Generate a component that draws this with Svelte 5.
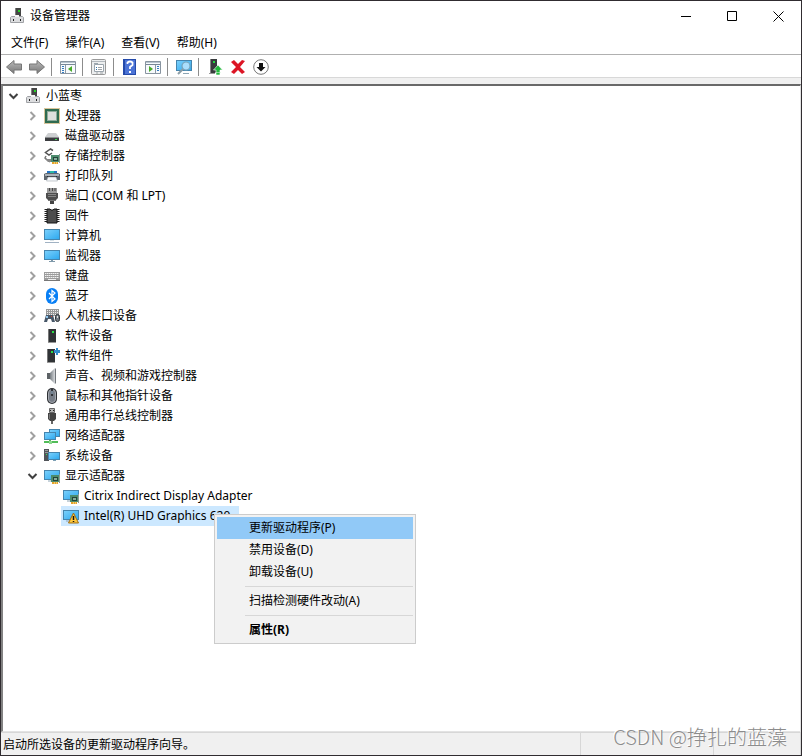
<script>
	const menus = ["文件(F)", "操作(A)", "查看(V)", "帮助(H)"];

	const tools = [
		[
			{ icon: "back", label: "后退" },
			{ icon: "forward", label: "前进" },
		],
		[{ icon: "console-tree", label: "显示/隐藏控制台树" }],
		[{ icon: "properties", label: "属性" }],
		[
			{ icon: "help", label: "帮助" },
			{ icon: "action-pane", label: "显示/隐藏操作窗格" },
		],
		[{ icon: "scan", label: "扫描检测硬件改动" }],
		[
			{ icon: "update", label: "更新驱动程序" },
			{ icon: "uninstall", label: "卸载设备" },
			{ icon: "disable", label: "禁用设备" },
		],
	];

	const categories = [
		{ icon: "cpu", name: "处理器" },
		{ icon: "disk", name: "磁盘驱动器" },
		{ icon: "storage", name: "存储控制器" },
		{ icon: "printer", name: "打印队列" },
		{ icon: "port", name: "端口 (COM 和 LPT)" },
		{ icon: "firmware", name: "固件" },
		{ icon: "pc", name: "计算机" },
		{ icon: "monitor", name: "监视器" },
		{ icon: "keyboard", name: "键盘" },
		{ icon: "bluetooth", name: "蓝牙" },
		{ icon: "hid", name: "人机接口设备" },
		{ icon: "software", name: "软件设备" },
		{ icon: "component", name: "软件组件" },
		{ icon: "sound", name: "声音、视频和游戏控制器" },
		{ icon: "mouse", name: "鼠标和其他指针设备" },
		{ icon: "usb", name: "通用串行总线控制器" },
		{ icon: "network", name: "网络适配器" },
		{ icon: "system", name: "系统设备" },
		{
			icon: "display",
			name: "显示适配器",
			devices: [
				{ icon: "display", name: "Citrix Indirect Display Adapter" },
				{ icon: "warning", name: "Intel(R) UHD Graphics 620" },
			],
		},
	];

	const actions = [
		["更新驱动程序(P)", "禁用设备(D)", "卸载设备(U)"],
		["扫描检测硬件改动(A)"],
		["属性(R)"],
	];

	let expanded = $state({ 显示适配器: true });
	let selected = $state("Intel(R) UHD Graphics 620");
	let menuOpen = $state(true);
</script>

{#snippet screen(x, y, w, h)}
	<rect {x} {y} width={w} height={h} fill="#4585ae" />
	<rect x={x + 1} y={y + 1} width={w - 2} height={h - 2} fill="url(#sky)" />
{/snippet}

{#snippet board()}
	<path d="M7 7h9v7H7z" fill="#4c8c6d" />
	<path d="M15.500 6v9" stroke="#8d9a94" />
	<path d="M9 9h5v4H9z" fill="#24443a" />
	<path d="M10 10h3v2h-3z" fill="#84ad9b" />
	<path d="M8 14h6v2H8z" fill="#e5a32a" />
	<path d="M10.500 14v2M12.500 14v2" stroke="#fff0b0" stroke-width=".5" />
{/snippet}

{#snippet tower(x)}
	<path d="M{x} 1h8v13H{x}z" fill="#303336" />
	<path d="M{x} 1h1v13H{x}z" fill="#777" />
	<path d="M{x + 4} 3h2v2h-2z" fill="#29df47" />
	<path d="M{x} 14h8v1H{x}z" fill="#999" />
{/snippet}

{#snippet icon(name)}
	<svg class="icon" viewBox="0 0 16 16" aria-hidden="true">
		{#if name === "computer"}
			<path d="M6 0h6v9H6z" fill="#454545" />
			<path d="M6 0h1v9H6z" fill="#808080" />
			<path d="M9 2h2v2H9z" fill="#25d425" />
			<path d="M1.500 9.500l1-1h11l1 1v5h-13z" fill="#dcdddf" stroke="#a0a2a6" />
			<path d="M6 7h4v2H6z" fill="#f4f4f4" />
			<path d="M4 11h1v2H4zM11 11h1v2h-1z" fill="#222" />
		{:else if name === "cpu"}
			<rect x=".5" y=".5" width="15" height="15" fill="none" stroke="#b08b37" stroke-dasharray="1 1" />
			<rect x="1" y="1" width="14" height="14" fill="#2f6b50" />
			<rect x="3.500" y="3.500" width="9" height="9" fill="#dedfdd" stroke="#8fab9a" />
		{:else if name === "disk"}
			<path d="M4 5h8l3 4H1z" fill="#cdcfd1" />
			<path d="M1 9h14v4H1z" fill="#3b3d40" />
			<path d="M1 9h14v1H1z" fill="#8b8d90" />
			<path d="M11 11h2v1h-2z" fill="#3be052" />
		{:else if name === "storage"}
			<path d="M9 2.500L6.500 1 1.500 4.500 5 7l3-2" fill="none" stroke="#555" stroke-width="1.500" />
			<path d="M2 8l-1 2 5 4" fill="none" stroke="#777" stroke-width="1.500" />
			<path d="M1 11h6v3H4z" fill="#888" />
			{@render board()}
		{:else if name === "printer"}
			<path d="M3 3h10v3H3z" fill="#2475c5" />
			<path d="M6 3h4v3H6z" fill="#28b9a6" />
			<path d="M0 6l2-1h12l2 1v6H0z" fill="#5e666e" />
			<path d="M1 6h14v2H1z" fill="#aab1b7" />
			<path d="M3 8h10v1H3z" fill="#252a30" />
			<path d="M4 9h8l1.500 4h-11z" fill="#f7fafc" stroke="#a2aaaf" stroke-width=".6" />
		{:else if name === "port"}
			<path d="M3 0h10v5H3z" fill="#999" />
			<path d="M5.500 0v3M8.500 0v3M11 0v3" stroke="#444" />
			<path d="M2 5h12v5l-2 2H4l-2-2z" fill="#4d4d4d" />
			<path d="M4 6h8v1H4zM4 8h8v1H4z" fill="#858585" />
			<path d="M4 12h8v1H4z" fill="#777" />
			<path d="M6 13h4v3H6z" fill="#444" />
		{:else if name === "firmware"}
			<path d="M2 1v14M14 1v14" stroke="#222" stroke-width="3" stroke-dasharray="1 1" />
			<path d="M3 1h3l1 1h2l1-1h3v14H3z" fill="#4c4c4c" stroke="#151515" />
		{:else if name === "pc"}
			{@render screen(0, 1, 16, 11)}
			<path d="M6 12h4v1H6z" fill="#d7e2e8" />
			<path d="M1 14h14v1H1z" fill="#a1b2c3" />
		{:else if name === "monitor"}
			{@render screen(0, 2, 16, 10)}
			<path d="M7 12h2v1h2v1H5v-1h2z" fill="#7f99aa" />
		{:else if name === "keyboard"}
			<rect x="0" y="4" width="16" height="9" fill="#9c9c9c" />
			<path d="M1 5.500h14M1 7.500h14M1 9.500h14" stroke="#f2f2f2" stroke-dasharray="1.500 .5" />
			<path d="M4 11.500h8" stroke="#eee" />
			<path d="M0 12.500h16" stroke="#777" />
		{:else if name === "bluetooth"}
			<rect x="2" y="0" width="12" height="16" rx="6" fill="#087ff5" />
			<path d="M5 5l6 6-3 2.500v-11L11 5l-6 6" fill="none" stroke="#fff" stroke-width="1.200" />
		{:else if name === "hid"}
			<path d="M2 1h13v7H2z" fill="#999" />
			<path d="M3 2.500h11M3 4.500h11M3 6.500h11" stroke="#eee" stroke-dasharray="1 1" />
			<path d="M2 7h7l2 7H8l-1-3H4l-1 3H0z" fill="#475768" />
			<path d="M2 8h2v2H2z" fill="#91c7ef" />
			<path d="M7 8h1v1H7z" fill="#e34b2a" />
			<rect x="11.500" y="6.500" width="4" height="7" rx="2" fill="#727981" stroke="#2c3237" />
			<path d="M13.500 8v2" stroke="#ddd" />
		{:else if name === "software"}
			{@render tower(4)}
		{:else if name === "component"}
			{@render tower(3)}
			<path d="M10 2h2V0h2v2h2v3h-2v2h-2V5h-2z" fill="#338dcc" />
		{:else if name === "sound"}
			<path d="M3 5h3v6H3z" fill="#5d6266" />
			<path d="M6 5l5-5v16l-5-5z" fill="url(#metal)" />
			<path d="M11 0l1 1v14l-1 1z" fill="#70757a" />
		{:else if name === "mouse"}
			<rect x="3" y="0" width="10" height="16" rx="5" fill="#2d3034" />
			<rect x="4.500" y="1.500" width="7" height="13" rx="3.500" fill="#777d87" stroke="#a4a8af" />
			<path d="M8 1v7" stroke="#303338" stroke-width="2" />
			<path d="M8 3v3" stroke="#b5d5ee" />
		{:else if name === "usb"}
			<path d="M5.500 .500h5v4h-5z" fill="#b4b4b4" stroke="#666" />
			<path d="M6 2h1v1H6zM9 2h1v1H9z" fill="#222" />
			<path d="M4 5h8v6l-2 2H6l-2-2z" fill="#444" />
			<path d="M5 6h1v5H5z" fill="#777" />
			<path d="M7 13h2v3H7z" fill="#666" />
		{:else if name === "network"}
			{@render screen(5, 1, 11, 8)}
			{@render screen(0, 4, 12, 8)}
			<path d="M6 12v2M0 14h14" stroke="#51bc58" stroke-width="2" />
			<path d="M5 13h3v3H5z" fill="#8bd78c" />
		{:else if name === "system"}
			<path d="M0 1h5v12H0z" fill="#505459" />
			<path d="M1 2h3v1H1zM1 4h3v1H1z" fill="#999" />
			<path d="M2 6h1v1H2z" fill="#31e15a" />
			{@render screen(4, 4, 12, 8)}
			<path d="M9 12h3v1H9z" fill="#7da0b5" />
		{:else if name === "display"}
			{@render screen(0, 2, 16, 10)}
			<path d="M4 13h3" stroke="#8fa6b6" />
			{@render board()}
		{:else if name === "warning"}
			{@render screen(0, 2, 16, 10)}
			<path d="M3 13h3" stroke="#8fa6b6" />
			<path d="M10.500 5l5 10h-10z" fill="#ffc83d" stroke="#a06c10" stroke-linejoin="round" />
			<path d="M10.500 8v4M10.500 13v1" stroke="#111" stroke-width="1.500" />
		{:else if name === "back" || name === "forward"}
			<path
				d={name === "back" ? "M.500 8L8 1.500V5h7.500v6H8v3.500z" : "M15.500 8L8 1.500V5H.500v6H8v3.500z"}
				fill="url(#arrow)"
				stroke="#777"
			/>
		{:else if name === "console-tree" || name === "action-pane"}
			<path d="M.500 2.500h15v12H.500z" fill="#f7fafc" stroke="#8894a0" />
			<path d="M1 3h14v1H1z" fill="#b8c4d0" />
			<path d="M1 5.500h14" stroke="#788797" />
			{#if name === "console-tree"}
				<path d="M5.500 6v8" stroke="#8c99a5" />
				<path d="M2 7.500h2M2 9.500h2M2 11.500h2M2 13.500h2" stroke="#347ac1" />
				<path d="M12 7v6l-4-3z" fill="#48ab29" />
			{:else}
				<path d="M10.500 6v8" stroke="#8c99a5" />
				<path d="M12 7.500h2M12 9.500h2M12 11.500h2" stroke="#347ac1" />
				<path d="M4 7v6l4-3z" fill="#48ab29" />
			{/if}
		{:else if name === "properties"}
			<rect x=".5" y=".5" width="14" height="15" rx="1" fill="#eceeef" stroke="#999" />
			<path d="M1 2.500h13" stroke="#b2b8bd" />
			<path d="M3.500 5.500h9v7h-9z" fill="#fff" stroke="#9ba5ad" />
			<path d="M3 4.500h4" stroke="#9ba5ad" />
			<path d="M5 8.500h1M5 10.500h1" stroke="#3376ab" />
			<path d="M7 8.500h4M7 10.500h4M5 14h2M9 14h3" stroke="#a0a5a9" />
		{:else if name === "help"}
			<path d="M1 0h13v16H1z" fill="#244aaa" />
			<path d="M3 1h10v14H3z" fill="#4b73d6" />
			<path d="M5.500 5V3.500q2.500-2 5 0V6L8 8v2" fill="none" stroke="#fff" stroke-width="1.800" />
			<path d="M7 12h2v2H7z" fill="#fff" />
		{:else if name === "scan"}
			{@render screen(0, 1, 16, 11)}
			<path d="M7 14.500h6" stroke="#8da5b4" />
			<circle cx="10" cy="7" r="4" fill="#a9defc" stroke="#76a4bb" stroke-width="1.200" />
			<path d="M7 10l-5 5" stroke="#8c9da6" stroke-width="2" />
		{:else if name === "update"}
			<path d="M3 0h7v14H3z" fill="#383b3d" />
			<path d="M3 0h1v14H3z" fill="#888" />
			<path d="M6 2h2v2H6z" fill="#25da3f" />
			<path d="M2 14h6v1H2z" fill="#999" />
			<path d="M11 6l4.500 5H13v5H9v-5H6.500z" fill="#22b83b" stroke="#fff" stroke-width=".6" />
			<path d="M8 13.500h6" stroke="#d8f4dc" stroke-width=".6" />
		{:else if name === "uninstall"}
			<path d="M1 3l3-2 4 4 4-4 3 1-5 6 5 5-3 2-4-4-4 4-3-2 5-5z" fill="#dc1525" />
		{:else if name === "disable"}
			<circle cx="8" cy="8" r="7.300" fill="#fff" stroke="#777" />
			<path d="M6 4h4v4h2.500L8 12.500 3.500 8H6z" fill="#111" />
		{/if}
	</svg>
{/snippet}

{#snippet chevron(open)}
	<svg class="icon chevron" class:open viewBox="0 0 16 16" aria-hidden="true">
		<path d={open ? "M4.500 6l4 4 4-4" : "M6.500 4l4 4-4 4"} />
	</svg>
{/snippet}

<!-- gradients shared by the icons -->
<svg class="defs" width="0" height="0" aria-hidden="true">
	<linearGradient id="sky" x2="1" y2="1">
		<stop stop-color="#79cffb" />
		<stop offset="1" stop-color="#2faaf0" />
	</linearGradient>
	<linearGradient id="metal">
		<stop stop-color="#777d82" />
		<stop offset="1" stop-color="#d7dadd" />
	</linearGradient>
	<linearGradient id="arrow" x2="0" y2="1">
		<stop stop-color="#bbb" />
		<stop offset="1" stop-color="#777" />
	</linearGradient>
</svg>

<div class="window">
	<header class="titlebar">
		{@render icon("computer")}
		<span class="title">设备管理器</span>
		<button aria-label="最小化">
			<svg viewBox="0 0 11 11"><path d="M0 5.500h10" /></svg>
		</button>
		<button aria-label="最大化">
			<svg viewBox="0 0 11 11"><path d="M.500 .500h9v9h-9z" /></svg>
		</button>
		<button aria-label="关闭">
			<svg viewBox="0 0 11 11"><path d="M.500 .500l10 10M10.500 .500l-10 10" /></svg>
		</button>
	</header>

	<nav class="menubar">
		{#each menus as menu}
			<button>{menu}</button>
		{/each}
	</nav>

	<div class="toolbar" role="toolbar" aria-label="工具栏">
		{#each tools as group}
			<div class="group">
				{#each group as tool}
					<button aria-label={tool.label}>{@render icon(tool.icon)}</button>
				{/each}
			</div>
		{/each}
	</div>

	<main class="tree">
		<button class="row root">
			{@render chevron(true)}
			{@render icon("computer")}
			<span>小蓝枣</span>
		</button>
		<ul>
			{#each categories as category}
				<li>
					<button
						class="row"
						aria-expanded={!!expanded[category.name]}
						onclick={() => (expanded[category.name] = !expanded[category.name])}>
						{@render chevron(expanded[category.name])}
						{@render icon(category.icon)}
						<span>{category.name}</span>
					</button>
					{#if category.devices && expanded[category.name]}
						<ul class="devices">
							{#each category.devices as device}
								<li>
									<button
										class="row device"
										class:selected={selected === device.name}
										onclick={() => (selected = device.name)}>
										{@render icon(device.icon)}
										<span>{device.name}</span>
									</button>
									{#if menuOpen && selected === device.name}
										<div class="context" role="menu">
											{#each actions as group}
												<div class="actions">
													{#each group as action}
														<button role="menuitem" onclick={() => (menuOpen = false)}>{action}</button>
													{/each}
												</div>
											{/each}
										</div>
									{/if}
								</li>
							{/each}
						</ul>
					{/if}
				</li>
			{/each}
		</ul>
	</main>

	<footer class="status">
		<span>启动所选设备的更新驱动程序向导。</span>
		<span></span>
		<span></span>
	</footer>
	<div class="watermark">CSDN @挣扎的蓝藻</div>
</div>

<style>
	.window {
		position: relative;
		display: flex;
		flex-direction: column;
		box-sizing: border-box;
		min-height: 100vh;
		border: 1px solid #302c30;
		background: #fff;
		color: #000;
		font: 12px/20px "Noto Sans", "Noto Sans CJK SC", sans-serif;
	}

	.defs {
		position: absolute;
	}

	button {
		border: 0;
		padding: 0;
		background: none;
		color: inherit;
		font: inherit;
	}

	ul {
		list-style: none;
		margin: 0;
		padding: 0;
	}

	.icon {
		display: block;
		flex: none;
		width: 16px;
		height: 16px;
	}

	.titlebar {
		display: flex;
		align-items: center;
		height: 30px;
		padding-left: 8px;
	}

	.title {
		flex: 1;
		padding-left: 5px;
	}

	.titlebar button {
		width: 46px;
		height: 30px;
	}

	.titlebar button svg {
		display: block;
		width: 11px;
		height: 11px;
		margin: auto;
		fill: none;
		stroke: #000;
	}

	.menubar {
		display: flex;
		gap: 1px;
		height: 23px;
		padding-left: 2px;
		border-bottom: 1px solid #b0b0b0;
	}

	.menubar button {
		padding: 1px 8px 0;
	}

	.toolbar {
		display: flex;
		height: 22px;
		padding: 0 2px;
		border-bottom: 1px solid #d8d8d8;
	}

	.group {
		display: flex;
		align-items: center;
		padding-top: 2px;
	}

	.group + .group::before {
		content: "";
		width: 1px;
		height: 18px;
		margin: 0 5px 0 2px;
		background: #8c8c8c;
	}

	.group button {
		width: 23px;
		height: 20px;
		padding-left: 3px;
	}

	.tree {
		flex: 1;
		border-top: 2px solid #696969;
		border-left: 2px solid #828282;
		border-right: 1px solid #e3e3e3;
		border-bottom: 1px solid #e3e3e3;
		padding-left: 2px;
		box-shadow: 0 -6px #f0f0f0;
		margin-top: 6px;
	}

	.row {
		display: flex;
		align-items: center;
		height: 20px;
		padding-left: 19px;
		text-align: left;
		white-space: nowrap;
	}

	.root {
		padding-left: 0;
	}

	.row .icon + .icon {
		margin-left: 4px;
	}

	.row span {
		padding-left: 5px;
	}

	.chevron {
		fill: none;
		stroke: #a0a0a0;
		stroke-width: 2;
	}

	.chevron.open {
		stroke: #404040;
	}

	.devices {
		padding-left: 56px;
	}

	.devices li {
		position: relative;
	}

	.device {
		padding: 0 9px 0 2px;
	}

	.selected {
		background: #cce8ff;
	}

	.context {
		position: absolute;
		top: 8px;
		left: 153px;
		box-sizing: border-box;
		width: 202px;
		padding: 2px;
		border: 1px solid #ccc;
		background: #f2f2f2;
	}

	.actions + .actions::before {
		content: "";
		display: block;
		height: 1px;
		margin: 3px 0 3px 28px;
		background: #d7d7d7;
	}

	.context button {
		display: block;
		width: 100%;
		height: 22px;
		padding-left: 32px;
		text-align: left;
	}

	.actions:first-child button:first-child {
		background: #91c9f7;
	}

	.actions:last-child button {
		font-weight: bold;
	}

	.status {
		display: flex;
		height: 22px;
		border-top: 1px solid #d7d7d7;
		background: #f0f0f0;
	}

	.status span {
		box-sizing: border-box;
		width: 133px;
		padding: 2px 2px 0;
		border-right: 1px solid #d7d7d7;
	}

	.status span:first-child {
		flex: 1;
	}

	.status span:last-child {
		width: 87px;
	}

	.watermark {
		position: absolute;
		right: 14px;
		bottom: 4px;
		color: #8c8c8c;
		font: 300 20px/28px "Noto Sans CJK SC", sans-serif;
		text-shadow: -1px -1px #fff;
	}
</style>
